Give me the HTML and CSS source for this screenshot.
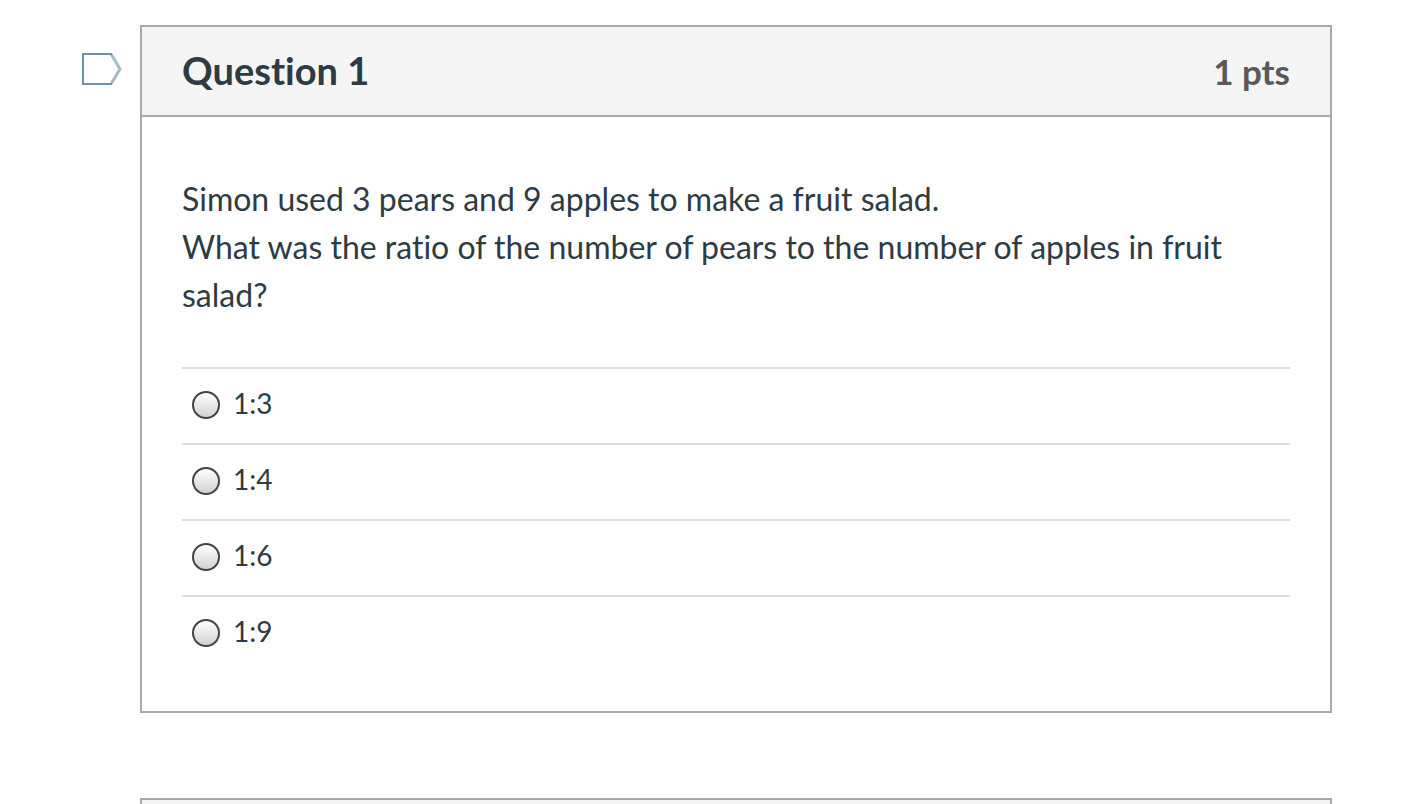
FILE: index.html
```html
<!DOCTYPE html>
<html lang="en">
<head>
  <meta charset="UTF-8" />
  <meta name="viewport" content="width=device-width, initial-scale=1.0"/>
  <title>Quiz</title>
  <link rel="stylesheet" href="styles.css">
</head>
<body>

  <main class="quiz">
    <form class="question-row">
      <button class="flag-btn" type="button" aria-label="Flag question">
        <svg width="42" height="34" viewBox="0 0 42 34">
          <path d="M30 2L39 17L30 32" fill="none" stroke="#a5bcc8" stroke-width="3" />
          <path d="M31 2H2V32H31" fill="none" stroke="#6f93a6" stroke-width="2" />
        </svg>
      </button>
      <section class="question">
        <header class="question-header">
          <h2>Question 1</h2>
          <span class="points">1 pts</span>
        </header>
        <div class="question-body">
          <p class="question-text" id="q1-text">Simon used 3 pears and 9 apples to make a fruit salad.<br>What was the ratio of the number of pears to the number of apples in fruit salad?</p>
          <div class="answers" role="radiogroup" aria-labelledby="q1-text">
            <label class="answer"><input type="radio" name="q1" value="1:3"><span>1:3</span></label>
            <label class="answer"><input type="radio" name="q1" value="1:4"><span>1:4</span></label>
            <label class="answer"><input type="radio" name="q1" value="1:6"><span>1:6</span></label>
            <label class="answer"><input type="radio" name="q1" value="1:9"><span>1:9</span></label>
          </div>
        </div>
      </section>
    </form>

    <!-- top of the next question -->
    <section class="next-question"></section>
  </main>

</body>
</html>
```

FILE: styles.css
```css
* {
  box-sizing: border-box;
}

body {
  margin: 0;
  font-family: Lato, sans-serif;
  font-variant-ligatures: none;
  background-color: #fff;
  color: #2d3b45;
}

.quiz {
  display: flex;
  flex-direction: column;
  min-height: 100vh;
  padding: 25px 87px 0 81px;
}

.question-row {
  display: flex;
  align-items: flex-start;
  margin-bottom: 85px;
}

.flag-btn {
  width: 59px;
  padding: 27px 0 0;
  border: none;
  background: none;
  text-align: left;
  cursor: pointer;
}

.flag-btn svg {
  display: block;
}

.question {
  flex: 1;
  border: 2px solid #aaa;
}

.next-question {
  flex: 1;
  margin-left: 59px;
  border: 2px solid #aaa;
  border-bottom: none;
  background-color: #f5f5f5;
}

.question-header {
  display: flex;
  justify-content: space-between;
  align-items: center;
  height: 90px;
  padding: 0 40px;
  background-color: #f5f5f5;
  border-bottom: 2px solid #aaa;
}

h2 {
  margin: 0;
  padding-bottom: 2px;
  font-size: 38px;
  line-height: 48px;
}

.points {
  font-size: 35px;
  font-weight: bold;
  color: #595959;
}

.question-body {
  padding: 58px 40px 40px;
}

.question-text {
  margin: 0 0 48px;
  font-size: 32px;
  line-height: 48px;
}

.answer {
  display: flex;
  align-items: center;
  gap: 13px;
  height: 76px;
  padding: 0 0 2px 10px;
  border-top: 2px solid #ddd;
  font-size: 28px;
  cursor: pointer;
}

.answer span {
  padding-bottom: 4px;
}

.answer input {
  appearance: none;
  width: 28px;
  height: 28px;
  margin: 0;
  border: 2px solid #444;
  border-radius: 50%;
  background: linear-gradient(#fff, #d2d2d2);
}

.answer input:checked {
  background: radial-gradient(#444 35%, #eee 40%);
}
```
